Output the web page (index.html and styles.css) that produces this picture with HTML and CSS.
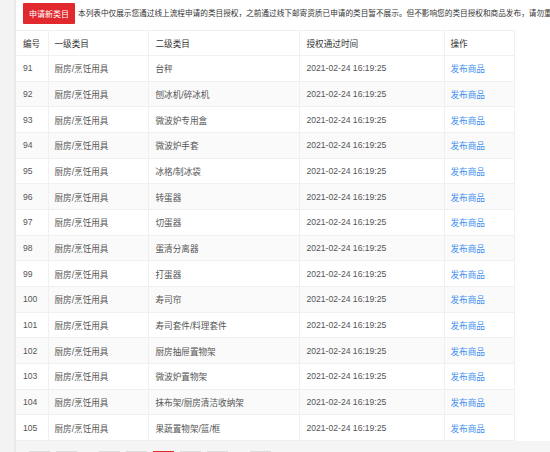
FILE: index.html
```html
<!DOCTYPE html>
<html lang="zh-CN">
<head>
<meta charset="utf-8">
<link rel="stylesheet" href="styles.css">
</head>
<body>
<div class="page">
  <aside class="side"></aside>
  <main class="main">
    <div class="top">
      <button class="apply">申请新类目</button>
      <span class="notice">本列表中仅展示您通过线上流程申请的类目授权，之前通过线下邮寄资质已申请的类目暂不展示。但不影响您的类目授权和商品发布，请勿重复申请。</span>
    </div>
    <table class="grid">
      <colgroup>
        <col class="c1"><col class="c2"><col class="c3"><col class="c4"><col class="c5">
      </colgroup>
      <thead>
        <tr><th>编号</th><th>一级类目</th><th>二级类目</th><th>授权通过时间</th><th>操作</th></tr>
      </thead>
      <tbody>
        <tr><td>91</td><td>厨房/烹饪用具</td><td>台秤</td><td>2021-02-24 16:19:25</td><td><a class="link">发布商品</a></td></tr>
        <tr><td>92</td><td>厨房/烹饪用具</td><td>刨冰机/碎冰机</td><td>2021-02-24 16:19:25</td><td><a class="link">发布商品</a></td></tr>
        <tr><td>93</td><td>厨房/烹饪用具</td><td>微波炉专用盒</td><td>2021-02-24 16:19:25</td><td><a class="link">发布商品</a></td></tr>
        <tr><td>94</td><td>厨房/烹饪用具</td><td>微波炉手套</td><td>2021-02-24 16:19:25</td><td><a class="link">发布商品</a></td></tr>
        <tr><td>95</td><td>厨房/烹饪用具</td><td>冰格/制冰袋</td><td>2021-02-24 16:19:25</td><td><a class="link">发布商品</a></td></tr>
        <tr><td>96</td><td>厨房/烹饪用具</td><td>转蛋器</td><td>2021-02-24 16:19:25</td><td><a class="link">发布商品</a></td></tr>
        <tr><td>97</td><td>厨房/烹饪用具</td><td>切蛋器</td><td>2021-02-24 16:19:25</td><td><a class="link">发布商品</a></td></tr>
        <tr><td>98</td><td>厨房/烹饪用具</td><td>蛋清分离器</td><td>2021-02-24 16:19:25</td><td><a class="link">发布商品</a></td></tr>
        <tr><td>99</td><td>厨房/烹饪用具</td><td>打蛋器</td><td>2021-02-24 16:19:25</td><td><a class="link">发布商品</a></td></tr>
        <tr><td>100</td><td>厨房/烹饪用具</td><td>寿司帘</td><td>2021-02-24 16:19:25</td><td><a class="link">发布商品</a></td></tr>
        <tr><td>101</td><td>厨房/烹饪用具</td><td>寿司套件/料理套件</td><td>2021-02-24 16:19:25</td><td><a class="link">发布商品</a></td></tr>
        <tr><td>102</td><td>厨房/烹饪用具</td><td>厨房抽屉置物架</td><td>2021-02-24 16:19:25</td><td><a class="link">发布商品</a></td></tr>
        <tr><td>103</td><td>厨房/烹饪用具</td><td>微波炉置物架</td><td>2021-02-24 16:19:25</td><td><a class="link">发布商品</a></td></tr>
        <tr><td>104</td><td>厨房/烹饪用具</td><td>抹布架/厨房清洁收纳架</td><td>2021-02-24 16:19:25</td><td><a class="link">发布商品</a></td></tr>
        <tr><td>105</td><td>厨房/烹饪用具</td><td>果蔬置物架/篮/框</td><td>2021-02-24 16:19:25</td><td><a class="link">发布商品</a></td></tr>
      </tbody>
    </table>
    <div class="foot">
      <span class="pg"></span><span class="pg"></span>
      <span class="pg gapl"></span><span class="pg"></span><span class="pg on"></span><span class="pg"></span><span class="pg"></span>
      <span class="pg gapl"></span>
    </div>
  </main>
</div>
</body>
</html>
```

FILE: styles.css
```css
html, body {
  margin: 0;
  padding: 0;
  background: #ffffff;
  overflow: hidden;
  width: 550px;
  height: 452px;
}
body {
  font-family: "Liberation Sans", "Noto Sans CJK SC", sans-serif;
  font-size: 8.6px;
  color: #555;
}
.page {
  display: flex;
  height: 452px;
}
.side {
  flex: 0 0 14px;
  background: #f3f3f3;
  border-right: 2px solid #e9e9e9;
}
.main {
  flex: 1;
  display: flex;
  flex-direction: column;
  min-width: 0;
}
.top {
  flex: 0 0 30px;
  height: 30px;
  display: flex;
  align-items: flex-start;
  padding: 3px 0 0 7px;
  box-sizing: border-box;
  white-space: nowrap;
  overflow: hidden;
}
.apply {
  flex: 0 0 auto;
  width: 52px;
  height: 21px;
  border: 0;
  border-radius: 1px;
  background: #e1282d;
  color: #fff;
  font-family: inherit;
  font-size: 8px;
  padding: 0;
  margin: 0;
}
.notice {
  margin-left: 3px;
  line-height: 21px;
  font-size: 7.65px;
  color: #333;
}
.grid {
  flex: 0 0 auto;
  width: 498px;
  border-collapse: collapse;
  table-layout: fixed;
}
.grid th, .grid td {
  border: 1px solid #f0f0f0;
  text-align: left;
  padding: 0 0 0 7px;
  font-weight: normal;
  white-space: nowrap;
  overflow: hidden;
}
.grid th {
  height: 24px;
  color: #333;
  background: #fff;
}
.grid td {
  height: 24.67px;
}
.grid tbody tr:nth-child(even) td {
  background: #fafafa;
}
.grid tr > :first-child { border-left: 0; }
.grid tr > :nth-child(2), .grid tr > :last-child { padding-left: 6px; }
.c1 { width: 32px; }
.c2 { width: 100px; }
.c3 { width: 151px; }
.c4 { width: 145px; }
.c5 { width: 70px; }
.link {
  color: #3d8ff0;
}
.foot {
  flex: 1;
  background: #f5f5f5;
  display: flex;
  align-items: flex-start;
  padding: 10px 0 0 13px;
  gap: 6px;
}
.pg {
  width: 19px;
  height: 20px;
  background: #fff;
  border: 1px solid #dcdcdc;
  flex: 0 0 auto;
}
.pg.on {
  background: #e1282d;
  border-color: #e1282d;
}
.gapl { margin-left: 16px; }
```
